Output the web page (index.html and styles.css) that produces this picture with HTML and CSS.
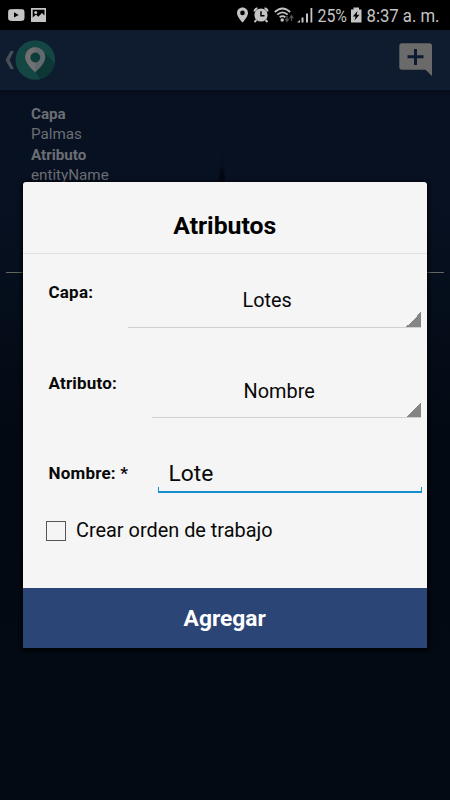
FILE: index.html
```html
<!DOCTYPE html>
<html lang="es">
<head>
<meta charset="utf-8">
<title>Atributos</title>
<link rel="stylesheet" href="styles.css">
</head>
<body>
<div class="status">
  <svg width="450" height="30" viewBox="0 0 450 30">
    <g fill="#c4c4c4">
      <path d="M10 9.2Q16.300 8.600 22.600 9.200Q24.500 9.500 24.500 12V18Q24.500 20.500 22.600 20.800Q16.300 21.400 10 20.800Q8.100 20.500 8.100 18V12Q8.100 9.500 10 9.200ZM14 12.200V17.600L18.700 14.900Z" fill-rule="evenodd"/>
      <path fill-rule="evenodd" d="M31 8H46V22H31ZM32.700 9.700V17.500L36 14.500L38.300 16.700L42 13L44.500 15.500V9.700Z"/>
      <circle cx="35.700" cy="12.400" r="1.500"/>
      <path fill-rule="evenodd" d="M242.500 7.600C239.400 7.600 237 10 237 13C237 17 242.500 22.600 242.500 22.600S248 17 248 13C248 10 245.600 7.600 242.500 7.600ZM242.500 10.600A2.300 2.300 0 1 1 242.500 15.200A2.300 2.300 0 1 1 242.500 10.600Z"/>
      <circle cx="261" cy="15" r="6.600"/>
      <path d="M254.300 11.500A4 4 0 0 1 257.500 8.300M264.500 8.300A4 4 0 0 1 267.700 11.500M256.500 20L254.500 22M265.500 20L267.500 22" fill="none" stroke="#c4c4c4" stroke-width="1.900"/>
      <path d="M261 11.200V15.700H264.500" fill="none" stroke="#000" stroke-width="1.500"/>
      <path d="M274.800 12Q282.500 4.900 290.200 12M277.300 14.700Q282.500 10 287.700 14.700M279.700 17.300Q282.500 14.900 285.300 17.300" fill="none" stroke="#c4c4c4" stroke-width="1.800"/>
      <circle cx="282.200" cy="20" r="1.700"/>
      <path d="M287 16V20M285.200 18.700L287 21.500L288.800 18.700M291.500 21V17M289.700 18.300L291.500 15.500L293.300 18.300" fill="none" stroke="#555" stroke-width="1.200"/>
      <path d="M297 22.500L300 20V22.500ZM301.500 17.500H303.500V22.500H301.500ZM306 13.500H308V22.500H306ZM310.500 8H312.300V22.500H310.500Z"/>
      <path fill-rule="evenodd" d="M353.500 7.500H359V9.500H361.500V22.500H351V9.500H353.500ZM357.500 11L352.700 16.500H355.500L354.500 20.500L359.500 14.800H356.700Z"/>
      <g class="clock">
        <text x="317.500" y="22.300" textLength="29.500" lengthAdjust="spacingAndGlyphs">25%</text>
        <text x="366.500" y="22.300" textLength="73" lengthAdjust="spacingAndGlyphs">8:37 a. m.</text>
      </g>
    </g>
  </svg>
</div>
<header class="bar">
  <svg width="60" height="60" viewBox="0 0 60 60">
    <path d="M10.500 21H13.900L9.500 30L13.900 39H10.500L5.500 30Z" fill="#484e57"/>
    <clipPath id="disc"><circle cx="35.300" cy="30" r="19.800"/></clipPath>
    <circle cx="35.300" cy="30" r="19.800" fill="#144643"/>
    <path d="M42 20L60 38V60H48L35.500 42Z" fill="#0c3734" clip-path="url(#disc)"/>
    <path d="M35.300 17.200C29.700 17.200 25.300 21.500 25.300 27C25.300 33 31 38 35.300 42.200C39.600 38 45.300 33 45.300 27C45.300 21.500 40.900 17.200 35.300 17.200Z" fill="#62696e"/>
    <path d="M35.300 17.200C29.700 17.200 25.300 21.500 25.300 27C25.300 33 31 38 35.300 42.200Z" fill="#707070"/>
    <circle cx="35.300" cy="27.500" r="4.900" fill="#0d3c3a"/>
  </svg>
  <svg width="34" height="34" viewBox="0 0 34 34">
    <path d="M3 0.300H30.500Q33 0.300 33 3V33L26.500 26.700H3Q0.300 26.700 0.300 24V3Q0.300 0.300 3 0.300Z" fill="#6a6a6a"/>
    <path d="M16.500 6V22M8.500 13.800H24.500" stroke="#0d1a34" stroke-width="3"/>
  </svg>
</header>
<main class="page">
  <dl class="details">
    <dt>Capa</dt><dd>Palmas</dd>
    <dt>Atributo</dt><dd>entityName</dd>
  </dl>
  <div class="rule"></div>
</main>
<section class="dialog">
  <h1>Atributos</h1>
  <div class="form">
    <div class="row"><label>Capa:</label><div class="select layer">Lotes</div></div>
    <div class="row"><label>Atributo:</label><div class="select attr">Nombre</div></div>
    <div class="row name"><label>Nombre: *</label><div class="input">Lote</div></div>
    <div class="check"><span class="box"></span><span>Crear orden de trabajo</span></div>
  </div>
  <div class="action">Agregar</div>
</section>
</body>
</html>
```
FILE: styles.css
```css
* { box-sizing: border-box; }
body {
  margin: 0;
  width: 450px;
  height: 800px;
  overflow: hidden;
  position: relative;
  background: #030a13;
  font-family: Roboto, sans-serif;
}
svg { display: block; }
.status { height: 30px; background: #000; }
.clock { font-size: 18.5px; }
.bar {
  height: 60px;
  background: #0f1b2f;
  display: flex;
  justify-content: space-between;
  padding-right: 17px;
}
.bar svg:last-child { margin-top: 13px; }
.page {
  height: 710px;
  padding: 14px 6px 0;
  background:
    radial-gradient(ellipse 4px 16px at 222px 91px, #030814 60%, transparent),
    linear-gradient(transparent, #050c19) 222px 35px / 1px 45px no-repeat,
    linear-gradient(#060d1d, #081122 8px, #081122 110px, #050e1b 210px, #030912 350px, #030a13);
}
.details { margin: 0 0 0 25px; height: 168px; font-size: 15.200px; line-height: 20.4px; color: #6b6e74; }
.details dt { font-weight: 700; }
.details dd { margin: 0; }
.rule { height: 1px; background: #66675f; }
.dialog {
  position: absolute;
  left: 23px;
  top: 182px;
  width: 403.5px;
  height: 466px;
  background: #f5f5f5;
  border-radius: 3px 3px 0 0;
  box-shadow: 0 1px 4px 1px #000;
  color: #080808;
  display: flex;
  flex-direction: column;
}
h1 {
  flex: none;
  margin: 0;
  height: 72px;
  padding-top: 15px;
  border-bottom: 1px solid #e0e0e0;
  font-size: 24.800px;
  line-height: 58px;
  font-weight: 700;
  text-align: center;
  color: #000;
}
.form { flex: none; height: 333.500px; padding: 20px 5.500px 0 25.500px; }
.row { height: 90.700px; display: flex; justify-content: space-between; }
.row label { font-size: 17px; letter-spacing: 0.200px; line-height: 36.500px; font-weight: 700; white-space: nowrap; }
.select {
  height: 53.500px;
  border-bottom: 1px solid #d0d0d0;
  font-size: 19.900px;
  line-height: 53px;
  background: linear-gradient(135deg, transparent 50%, #858585 50%) right bottom / 15px 15px no-repeat;
}
.layer { width: 293.500px; padding-left: 115px; }
.attr { width: 269.500px; padding-left: 92px; }
.name { height: 64.600px; margin-right: -0.500px; }
.input {
  width: 264px;
  height: 37.500px;
  padding-left: 11px;
  font-size: 22.800px;
  line-height: 38px;
  background:
    linear-gradient(#168fce, #168fce) left bottom / 100% 2px no-repeat,
    linear-gradient(#168fce, #168fce) left bottom / 1px 6px no-repeat,
    linear-gradient(#168fce, #168fce) right bottom / 1px 6px no-repeat;
}
.check { display: flex; align-items: center; gap: 10px; height: 24px; margin: -1px 0 0 -2.500px; font-size: 19.900px; line-height: 25px; }
.box { width: 20px; height: 20px; border: 1px solid #555; }
.action {
  height: 60.500px;
  background: #2b4576;
  color: #fff;
  font-size: 22.800px;
  line-height: 62px;
  font-weight: 700;
  text-align: center;
}
```
